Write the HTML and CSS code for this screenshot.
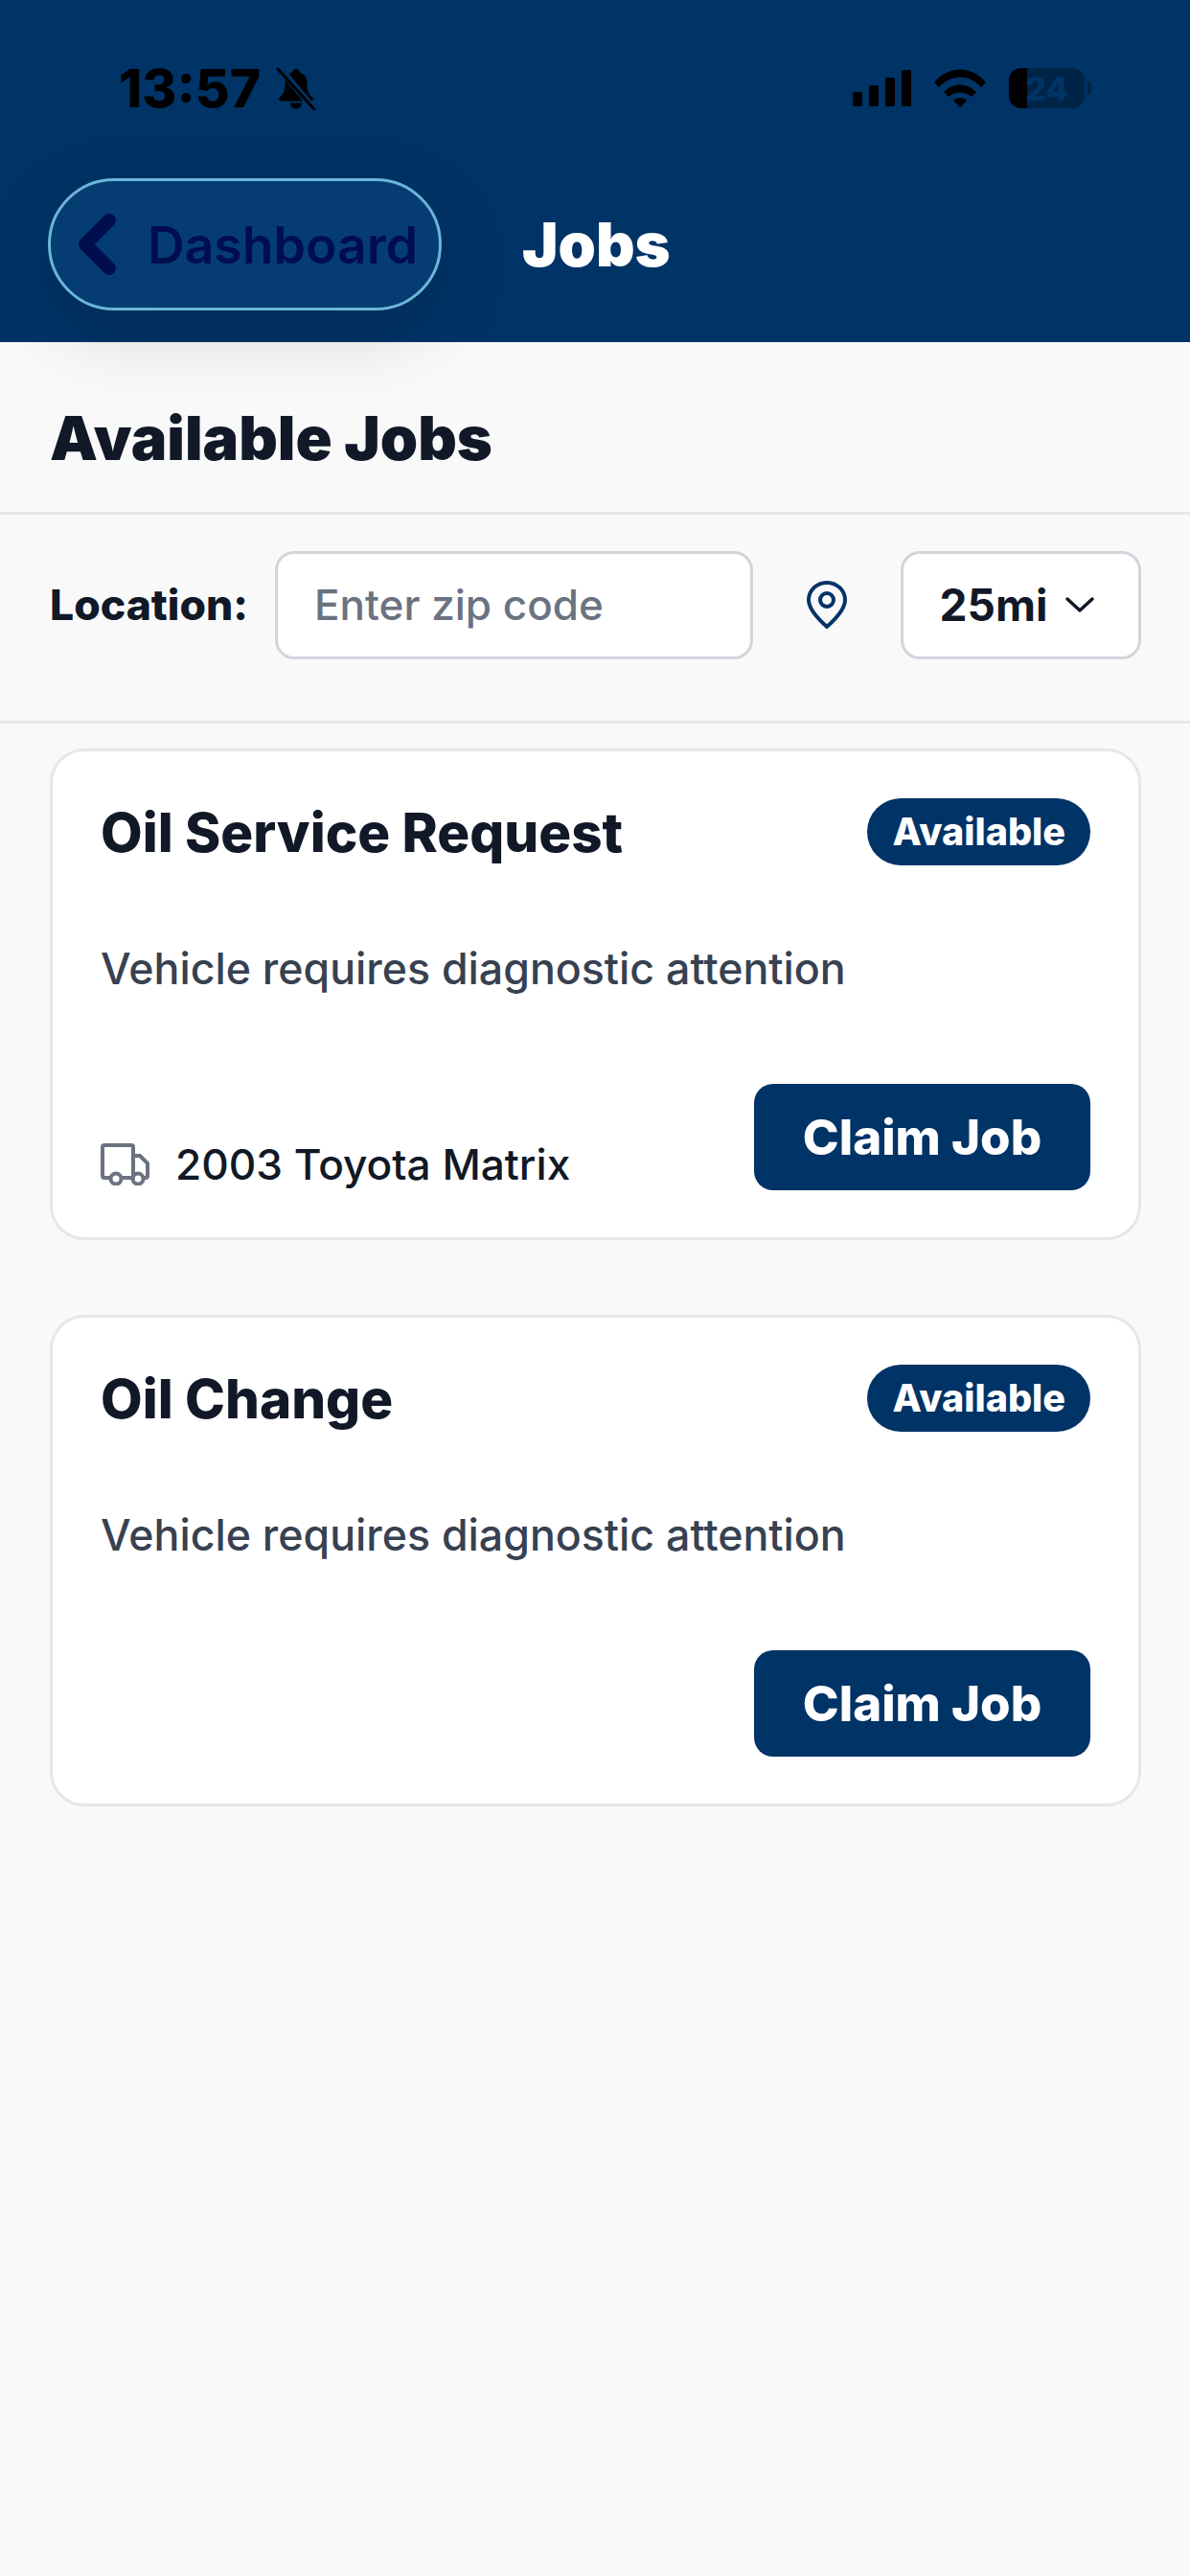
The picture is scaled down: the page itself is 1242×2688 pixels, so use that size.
FILE: index.html
```html
<!DOCTYPE html>
<html lang="en">
<head>
    <meta charset="UTF-8">
    <meta name="viewport" content="width=device-width, initial-scale=1.0">
    <title>Jobs</title>
    <link rel="stylesheet" href="styles.css">
</head>
<body>
    <header class="top">
        <div class="status">
            <div class="status-left">
                <span class="clock">13:57</span>
                <svg class="bell" viewBox="0 0 44 46" width="44" height="46">
                    <path d="M22 3c-2 0-3.500 1.500-3.800 3.500C12 8.500 10.500 13 10.500 19c0 7-2 10-5.500 13.500-1.500 1.500-.5 4 1.500 4h31c2 0 3-2.500 1.500-4C35 29 33.500 26 33.500 19c0-6-1.500-10.500-7.700-12.500C25.500 4.500 24 3 22 3z" fill="#000"/>
                    <path d="M16 38.500h12c0 3.500-2.500 6-6 6s-6-2.500-6-6z" fill="#000"/>
                    <path d="M4 1l36 43" stroke="#003366" stroke-width="7"/>
                    <path d="M3 3l38 42" stroke="#000" stroke-width="3" stroke-linecap="round"/>
                </svg>
            </div>
            <div class="status-right">
                <div class="signal">
                    <span class="bar bar1"></span>
                    <span class="bar bar2"></span>
                    <span class="bar bar3"></span>
                    <span class="bar bar4"></span>
                </div>
                <svg class="wifi" viewBox="0 0 54 40" width="54" height="40">
                    <path d="M0 14C15-4 39-4 54 14l-5 5C36 5 18 5 5 19z" fill="#000"/>
                    <path d="M10 24c10-10 24-10 34 0l-5 5c-7-6-17-6-24 0z" fill="#000"/>
                    <path d="M20 33c4-4 10-4 14 0l-7 7z" fill="#000"/>
                </svg>
                <div class="battery">
                    <span class="battery-fill"></span>
                    <span class="battery-num">24</span>
                </div>
                <span class="battery-nub"></span>
            </div>
        </div>
        <nav class="nav">
            <a class="back" href="#">
                <svg class="back-icon" viewBox="0 0 42 66" width="42" height="66">
                    <path d="M33 8L8 33l25 25" fill="none" stroke="#000e50" stroke-width="14" stroke-linecap="round" stroke-linejoin="round"/>
                </svg>
                <span>Dashboard</span>
            </a>
            <h1 class="nav-title">Jobs</h1>
        </nav>
    </header>

    <main>
        <section class="heading">
            <h2>Available Jobs</h2>
        </section>

        <section class="filter">
            <label class="filter-label" for="zip">Location:</label>
            <input class="zip" id="zip" type="text" placeholder="Enter zip code">
            <svg class="pin" viewBox="0 0 44 50" width="44" height="50">
                <path d="M22 2C11 2 3 10.500 3 20c0 10 10 20 19 28 9-8 19-18 19-28C41 10.500 33 2 22 2z" fill="none" stroke="#003366" stroke-width="4" stroke-linejoin="round"/>
                <circle cx="22" cy="20" r="7" fill="none" stroke="#003366" stroke-width="4"/>
            </svg>
            <button class="radius" type="button">
                <span>25mi</span>
                <svg viewBox="0 0 32 18" width="32" height="18">
                    <path d="M3 3l13 12L29 3" fill="none" stroke="#111827" stroke-width="3.500" stroke-linecap="round" stroke-linejoin="round"/>
                </svg>
            </button>
        </section>

        <section class="jobs">
            <article class="card">
                <div class="card-head">
                    <h3>Oil Service Request</h3>
                    <span class="badge">Available</span>
                </div>
                <p class="desc">Vehicle requires diagnostic attention</p>
                <div class="card-foot">
                    <div class="vehicle">
                        <svg viewBox="0 0 52 44" width="52" height="44">
                            <path d="M10 36H4a2 2 0 0 1-2-2V4a2 2 0 0 1 2-2h28a2 2 0 0 1 2 2v32H22" fill="none" stroke="#6b7280" stroke-width="4" stroke-linejoin="round"/>
                            <path d="M34 13h7l8 8v13a2 2 0 0 1-2 2h-2M34 36h-1" fill="none" stroke="#6b7280" stroke-width="4" stroke-linejoin="round"/>
                            <circle cx="16" cy="37" r="5.500" fill="none" stroke="#6b7280" stroke-width="4"/>
                            <circle cx="39" cy="37" r="5.500" fill="none" stroke="#6b7280" stroke-width="4"/>
                        </svg>
                        <span>2003 Toyota Matrix</span>
                    </div>
                    <button class="claim" type="button">Claim Job</button>
                </div>
            </article>

            <article class="card">
                <div class="card-head">
                    <h3>Oil Change</h3>
                    <span class="badge">Available</span>
                </div>
                <p class="desc">Vehicle requires diagnostic attention</p>
                <div class="card-foot">
                    <button class="claim" type="button">Claim Job</button>
                </div>
            </article>
        </section>
    </main>
</body>
</html>
```

FILE: styles.css
```css
* {
    box-sizing: border-box;
}
body {
    margin: 0;
    min-height: 2688px;
    background-color: #f9f9fa;
    font-family: 'Inter', 'Liberation Sans', sans-serif;
    color: #111827;
}
h1, h2, h3, p {
    margin: 0;
}

/* barra de cima */
.top {
    position: relative;
    z-index: 2;
    height: 357px;
    padding-top: 62px;
    background-color: #003366;
}
.status {
    display: flex;
    justify-content: space-between;
    align-items: center;
    height: 60px;
    padding: 0 103px 0 124px;
}
.status-left {
    display: flex;
    align-items: center;
    gap: 15px;
}
.clock {
    font-size: 55px;
    font-weight: 800;
    line-height: 60px;
    color: #000;
}
.status-right {
    display: flex;
    align-items: center;
}
.signal {
    display: flex;
    align-items: flex-end;
    gap: 7px;
    height: 38px;
    margin-right: 24px;
}
.bar {
    width: 10px;
    border-radius: 2px;
    background-color: #000;
}
.bar1 { height: 15px; }
.bar2 { height: 22px; }
.bar3 { height: 30px; }
.bar4 { height: 38px; }
.wifi {
    margin-right: 24px;
}
.battery {
    position: relative;
    display: flex;
    justify-content: center;
    align-items: center;
    width: 79px;
    height: 42px;
    overflow: hidden;
    border-radius: 13px;
    background-color: #002448;
}
.battery-fill {
    position: absolute;
    top: 0;
    bottom: 0;
    left: 0;
    width: 19px;
    background-color: #000;
}
.battery-num {
    position: relative;
    font-size: 34px;
    font-weight: 800;
    color: #003366;
}
.battery-nub {
    width: 4px;
    height: 14px;
    margin-left: 3px;
    border-radius: 0 4px 4px 0;
    background-color: #002448;
}

.nav {
    display: flex;
    align-items: center;
    margin-top: 64px;
    padding-left: 50px;
}
.back {
    display: flex;
    align-items: center;
    width: 411px;
    height: 138px;
    padding-left: 28px;
    border: 3px solid #6cb6d9;
    border-radius: 69px;
    background-color: #053d72;
    box-shadow: 0 24px 80px rgba(0, 0, 0, 0.14);
    font-size: 53.5px;
    font-weight: 600;
    color: #000e50;
    text-decoration: none;
}
.back-icon {
    margin-right: 31px;
}
.nav-title {
    margin-left: 84px;
    font-size: 63px;
    font-weight: 900;
    color: #fff;
}

/* filtros */
.heading {
    height: 180px;
    padding: 70px 52px 0;
    border-bottom: 3px solid #e5e7eb;
}
.heading h2 {
    font-size: 63px;
    font-weight: 900;
    line-height: 60px;
}
.filter {
    display: flex;
    align-items: center;
    height: 218px;
    padding: 0 51px 27px 52px;
    border-bottom: 3px solid #e5e7eb;
}
.filter-label {
    width: 235px;
    font-size: 44.500px;
    font-weight: 800;
}
.zip {
    width: 499px;
    height: 113px;
    padding: 0 38px;
    border: 3px solid #d1d5db;
    border-radius: 20px;
    background-color: #fff;
    font-family: inherit;
    font-size: 44px;
    font-weight: 500;
}
.zip::placeholder {
    color: #6b7280;
    opacity: 1;
}
.pin {
    margin: 0 55px;
}
.radius {
    display: flex;
    align-items: center;
    justify-content: center;
    gap: 18px;
    width: 251px;
    height: 113px;
    padding: 0 7px 0 0;
    border: 3px solid #d1d5db;
    border-radius: 20px;
    background-color: #fff;
    font-family: inherit;
    font-size: 46px;
    font-weight: 700;
    color: #111827;
}

/* lista */
.jobs {
    display: flex;
    flex-direction: column;
    gap: 78px;
    padding: 26px 51px 26px 52px;
}
.card {
    height: 513px;
    padding: 49px 50px 48px;
    border: 3px solid #e5e7eb;
    border-radius: 36px;
    background-color: #fff;
}
.card-head {
    display: flex;
    justify-content: space-between;
    align-items: center;
}
.card-head h3 {
    font-size: 56.500px;
    font-weight: 800;
}
.badge {
    display: flex;
    align-items: center;
    height: 70px;
    padding: 0 26px;
    border-radius: 35px;
    background-color: #003366;
    font-size: 39.500px;
    font-weight: 800;
    color: #fff;
}
.desc {
    margin-top: 78px;
    font-size: 44.700px;
    font-weight: 500;
    line-height: 60px;
    color: #374151;
}
.card-foot {
    display: flex;
    justify-content: space-between;
    align-items: flex-end;
    margin-top: 90px;
}
.vehicle {
    display: flex;
    align-items: center;
    gap: 26px;
    height: 54px;
    font-size: 44.200px;
    font-weight: 500;
}
.claim {
    width: 351px;
    height: 111px;
    margin-left: auto;
    padding: 0;
    border: none;
    border-radius: 20px;
    background-color: #003366;
    font-family: inherit;
    font-size: 51px;
    font-weight: 800;
    color: #fff;
}
```
